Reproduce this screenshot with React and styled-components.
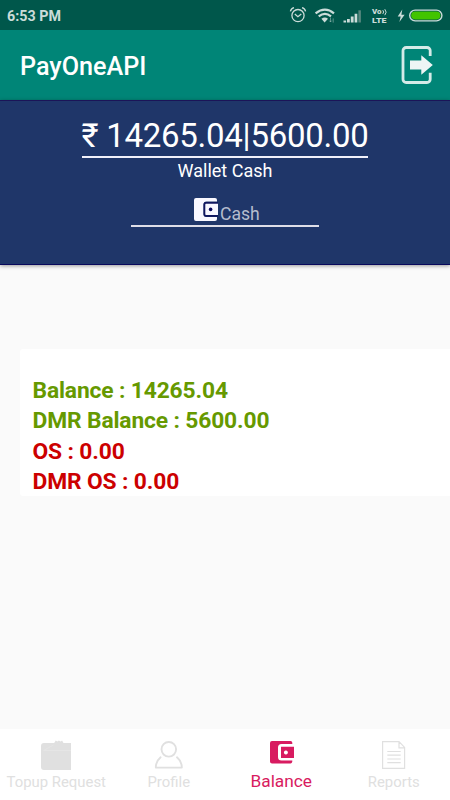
import React from 'react';
import styled, { createGlobalStyle } from 'styled-components';

const GlobalStyle = createGlobalStyle`
  * { box-sizing: border-box; }
  body { margin: 0; background: #fafafa; font-family: Roboto, "Noto Sans", sans-serif; }
`;

const Screen = styled.div`
  width: 450px;
  height: 800px;
  display: flex;
  flex-direction: column;
  overflow: hidden;
  background: #fafafa;
`;

const StatusBar = styled.div`
  flex: none;
  height: 30px;
  padding: 1px 7px 0 7px;
  display: flex;
  align-items: center;
  justify-content: space-between;
  background: #00574b;
  color: #cbdcd9;
`;

const Clock = styled.span`
  font-size: 14.3px;
  font-weight: 700;
  line-height: 30px;
  white-space: nowrap;
`;

const StatusIcons = styled.svg`
  flex: none;
  width: 155px;
  height: 22px;
  display: block;
`;

const NetworkLabel = styled.text`
  font-family: Roboto, sans-serif;
  font-weight: 900;
  font-size: 6.8px;
  fill: #cbdcd9;
`;

const Toolbar = styled.header`
  flex: none;
  height: 70px;
  padding: 3px 16px 0 20px;
  display: flex;
  align-items: center;
  justify-content: space-between;
  background: #008577;
`;

const Title = styled.h1`
  margin: 0;
  color: #fff;
  font-size: 25.2px;
  font-weight: 500;
  line-height: 30px;
`;

const LogoutIcon = styled.svg`
  width: 34px;
  height: 40px;
  display: block;
  margin-top: -3px;
`;

const WalletPanel = styled.section`
  flex: none;
  height: 165px;
  padding-top: 16px;
  display: flex;
  flex-direction: column;
  align-items: center;
  background: #1f3669;
  border-top: 1px solid #1b1458;
  border-bottom: 1px solid #08085c;
  box-shadow: 0 1px 4px rgba(0, 0, 0, 0.4);
  color: #fff;
`;

const Amount = styled.div`
  width: 286px;
  height: 41px;
  border-bottom: 2px solid #f0f0fa;
  display: flex;
  justify-content: center;
  font-size: 33px;
  letter-spacing: -0.27px;
  line-height: 37px;
  white-space: pre;
`;

const Caption = styled.div`
  font-size: 18px;
  line-height: 24px;
  margin-top: 1px;
`;

const CashField = styled.div`
  width: 188px;
  height: 30px;
  margin-top: 14px;
  padding-left: 63px;
  border-bottom: 2px solid #dedee8;
  display: flex;
  gap: 2px;
  color: #b4bccd;
  font-size: 17.6px;
  line-height: 34px;
`;

const WalletGlyph = styled.svg`
  flex: none;
  width: 24px;
  height: 24px;
  margin-top: 1px;
`;

const BalanceCard = styled.section`
  flex: none;
  height: 147px;
  margin: 84px 0 0 20px;
  padding: 26.6px 0 0 12.5px;
  background: #fff;
  border-radius: 3px 0 0 3px;
`;

const BalanceRow = styled.div`
  color: ${(p) => (p.$due ? '#cc0000' : '#669900')};
  font-size: 22.8px;
  font-weight: 700;
  letter-spacing: -0.14px;
  line-height: 30.6px;
  white-space: nowrap;
`;

const BottomNav = styled.nav`
  flex: none;
  height: 71px;
  margin-top: auto;
  display: grid;
  grid-template-columns: repeat(4, 1fr);
  background: #fff;
`;

const NavItem = styled.div`
  display: flex;
  flex-direction: column;
  align-items: center;
  padding-top: 8px;
  color: ${(p) => (p.$active ? '#d81b60' : '#e0e0e0')};
`;

const NavIcon = styled.svg`
  flex: none;
  width: 32px;
  height: 34px;
  display: block;
`;

const NavLabel = styled.span`
  font-size: ${(p) => (p.$active ? '17.3px' : '14.9px')};
  line-height: 20px;
  margin-top: ${(p) => (p.$active ? '0' : '1px')};
  white-space: nowrap;
`;

function SystemIcons() {
  return (
    <StatusIcons viewBox="288 4 155 22" fill="none" stroke="#cbdcd9">
      <circle cx="298" cy="14.6" r="6.1" strokeWidth="1.3" />
      <path d="M290.4 10.4Q291 7.5 294 6.7M305.6 10.4Q305 7.5 302 6.7M294.8 13l3.1 2.7 3.4-2.8" strokeWidth="1.3" />
      <path d="M315.6 12.3Q325 4.8 334 12.3M318.7 15.3Q325 10.4 331 15.3" strokeWidth="2.2" />
      <path d="M321.4 17.8Q325 15.2 328 17.8L324.6 21.6Z" fill="#cbdcd9" stroke="none" />
      <path d="M330.5 16.6v4.2m-1.2-1.2 1.2 1.4 1.2-1.4M333.2 21.6v-4.2" strokeWidth=".8" opacity=".55" />
      <path d="M343.5 21.5v-2h2.6v2zM347 21.5v-3.6h2.8v3.6zM350.8 21.5v-6h2.8v6zM354.6 21.5v-8.8h2.7v8.8z" fill="#cbdcd9" stroke="none" />
      <path d="M358.4 21.5V9.3h2.5V21.5z" fill="#57877f" stroke="none" />
      <g stroke="none">
        <NetworkLabel x="372" y="13.4" textLength="9.5" lengthAdjust="spacingAndGlyphs">Vo</NetworkLabel>
        <NetworkLabel x="372" y="21.5" textLength="14.5" lengthAdjust="spacingAndGlyphs">LTE</NetworkLabel>
      </g>
      <path d="M382.8 9.2q1.7 1.8 0 3.7M384.8 8.2q2.7 3 0 6" strokeWidth="1" />
      <path d="M402.3 8.6 397.7 15.4h3L399.4 21 404.6 13.8h-3.2Z" fill="#cbdcd9" stroke="none" />
      <rect x="409.7" y="9.1" width="32.2" height="10.8" rx="5.4" strokeWidth="1.4" />
      <rect x="411.2" y="10.6" width="29.2" height="7.8" rx="3.8" fill="#42c400" stroke="none" />
    </StatusIcons>
  );
}

function WalletMark() {
  return (
    <WalletGlyph viewBox="0 0 24 24">
      <path d="M2 0H21a2 2 0 0 1 2 2V3.5H12.5a3 3 0 0 0-3 3V16a3 3 0 0 0 3 3H23v2a2 2 0 0 1-2 2H2a2 2 0 0 1-2-2V2a2 2 0 0 1 2-2Z" fill="#f9f8ff" />
      <path d="M25 4.8H12a1.6 1.6 0 0 0-1.6 1.6V16.2a1.6 1.6 0 0 0 1.6 1.6H25" fill="#f9f8ff" stroke="#10165f" strokeWidth="1.8" />
      <circle cx="16.6" cy="11.4" r="1.8" fill="#08085c" />
    </WalletGlyph>
  );
}

export default function App() {
  return (
    <>
      <GlobalStyle />
      <Screen>
        <StatusBar>
          <Clock>6:53 PM</Clock>
          <SystemIcons />
        </StatusBar>
        <Toolbar>
          <Title>PayOneAPI</Title>
          <LogoutIcon viewBox="400 45 34 40">
            <path d="M430.2 56v-5.2a3.2 3.2 0 0 0-3.2-3.3h-20.8a3.2 3.2 0 0 0-3.2 3.3v28.4a3.2 3.2 0 0 0 3.2 3.3h20.8a3.2 3.2 0 0 0 3.2-3.3v-6.5" fill="none" stroke="#d4ebe8" strokeWidth="2.8" />
            <path d="M410 60.5h11.3v-5.3L432.8 65l-11.5 9.8v-5.3H410Z" fill="#edf5f5" />
          </LogoutIcon>
        </Toolbar>
        <WalletPanel>
          <Amount>₹ 14265.04|5600.00</Amount>
          <Caption>Wallet Cash</Caption>
          <CashField>
            <WalletMark />
            <span>Cash</span>
          </CashField>
        </WalletPanel>
        <BalanceCard>
          <BalanceRow>Balance : 14265.04</BalanceRow>
          <BalanceRow>DMR Balance : 5600.00</BalanceRow>
          <BalanceRow $due>OS : 0.00</BalanceRow>
          <BalanceRow $due>DMR OS : 0.00</BalanceRow>
        </BalanceCard>
        <BottomNav>
          <NavItem>
            <NavIcon viewBox="40 737 32 34">
              <path d="M44 743h10.2l1.5-2.4 1.7 1 1.5-1.1 1.7 1.1 1.5-1 1.4 2.4H71v27H44a3 3 0 0 1-3-3v-21a3 3 0 0 1 3-3Z" fill="currentColor" />
              <path d="M43.5 750.5l10-5.5M43.5 750.5H71" stroke="#e8e8e8" strokeWidth=".6" />
            </NavIcon>
            <NavLabel>Topup Request</NavLabel>
          </NavItem>
          <NavItem>
            <NavIcon viewBox="153 737 32 34" fill="none" stroke="currentColor" strokeWidth="1.9">
              <circle cx="168.8" cy="749.3" r="7.3" />
              <path d="M160.6 757.3q-4.8 4.2-4.8 10.3h26q0-6.1-4.8-10.3" strokeLinecap="round" strokeLinejoin="round" />
            </NavIcon>
            <NavLabel>Profile</NavLabel>
          </NavItem>
          <NavItem $active>
            <NavIcon viewBox="265 737 32 34">
              <path d="M272 741h18.5a1.8 1.8 0 0 1 1.8 1.8v1.2H281.5a3.5 3.5 0 0 0-3.5 3.5v9.4a3.5 3.5 0 0 0 3.5 3.5h10.8v1.2a1.8 1.8 0 0 1-1.8 1.8H272a2 2 0 0 1-2-2V743a2 2 0 0 1 2-2Z" fill="currentColor" />
              <path fillRule="evenodd" d="M281 746.8h13V758h-13Zm4.9 3.7a2 2 0 1 0 .01 0Z" fill="currentColor" />
            </NavIcon>
            <NavLabel $active>Balance</NavLabel>
          </NavItem>
          <NavItem>
            <NavIcon viewBox="378 737 32 34" fill="none" stroke="currentColor" strokeWidth="1.2">
              <path d="M383 741.6h16l5.6 5.8v21H382.6v-26.8ZM399 741.6v6.2h5.6M387.3 751.5h13.4M387.3 755.2h13.4M387.3 759h13.4M387.3 762.6h13.4" />
            </NavIcon>
            <NavLabel>Reports</NavLabel>
          </NavItem>
        </BottomNav>
      </Screen>
    </>
  );
}
